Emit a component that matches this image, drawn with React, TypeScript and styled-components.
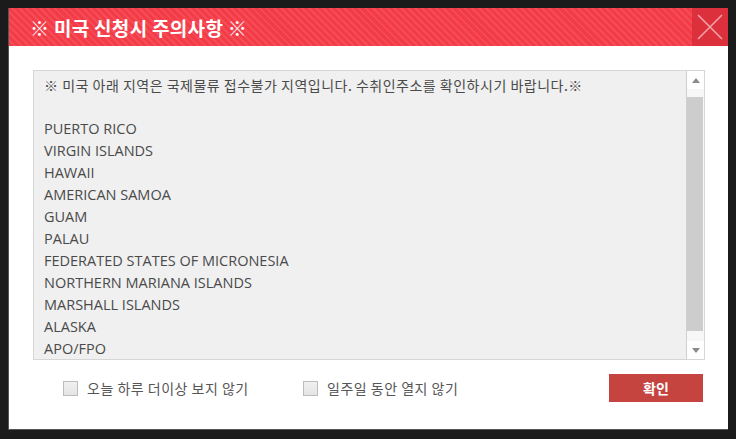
import { createGlobalStyle, styled } from 'styled-components';

const GlobalStyle = createGlobalStyle`
  html, body {
    margin: 0;
    padding: 0;
    background: #1b1b1b;
  }
  body {
    padding: 8px;
    font-family: 'Open Sans', 'Noto Sans CJK KR', sans-serif;
  }
`;

const regions = [
  'PUERTO RICO',
  'VIRGIN ISLANDS',
  'HAWAII',
  'AMERICAN SAMOA',
  'GUAM',
  'PALAU',
  'FEDERATED STATES OF MICRONESIA',
  'NORTHERN MARIANA ISLANDS',
  'MARSHALL ISLANDS',
  'ALASKA',
  'APO/FPO',
];

const Modal = styled.div`
  width: 720px;
  height: 422px;
  box-sizing: border-box;
  background: #fff;
  border-left: 1px solid #555;
  border-bottom: 1px solid #555;
  display: flex;
  flex-direction: column;
`;

const Header = styled.header`
  display: flex;
  align-items: center;
  height: 38px;
  flex-shrink: 0;
  background: repeating-linear-gradient(
    45deg,
    #f43c48 0px,
    #f43c48 3px,
    #f54d57 3px,
    #f54d57 5px
  );
`;

const Title = styled.h1`
  flex: 1;
  margin: 0;
  padding-left: 21px;
  font-family: 'Noto Sans CJK KR', sans-serif;
  font-size: 19px;
  font-weight: 700;
  color: #fff;
  letter-spacing: 0.3px;
`;

const CloseButton = styled.button`
  width: 36px;
  height: 38px;
  padding: 0;
  border: 0;
  background: #dc303c;
  display: flex;
  align-items: center;
  justify-content: center;
  cursor: pointer;
`;

const Body = styled.div`
  flex: 1;
  display: flex;
  flex-direction: column;
  padding: 24px 23px 0 24px;
`;

const NoticeBox = styled.div`
  display: flex;
  height: 290px;
  box-sizing: border-box;
  border: 1px solid #d6d6d6;
  background: #f0f0f0;
`;

const NoticeText = styled.div`
  flex: 1;
  overflow: hidden;
  padding: 3px 10px;
  line-height: 22px;
  color: #4a4a4a;
`;

const Line = styled.div<{ $gap?: boolean }>`
  white-space: nowrap;
  margin-bottom: ${({ $gap }) => ($gap ? '22px' : '0')};
  font-family: 'Open Sans', 'Noto Sans CJK KR', sans-serif;
  font-size: 14.5px;
`;

const KoreanLine = styled(Line)`
  font-family: 'Noto Sans CJK KR', sans-serif;
  font-size: 14px;
  letter-spacing: 0.5px;
`;

const Scrollbar = styled.div`
  width: 17px;
  border-left: 1px solid #cfcfcf;
  background: #f7f7f7;
  display: flex;
  flex-direction: column;
`;

const ArrowButton = styled.div`
  height: 18px;
  background: #fff;
  display: flex;
  align-items: center;
  justify-content: center;
`;

const Track = styled.div`
  flex: 1;
  padding: 8px 1px 10px 0;
  display: flex;
`;

const Thumb = styled.div`
  flex: 1;
  background: #cdcdcd;
`;

const Footer = styled.div`
  display: flex;
  align-items: center;
  padding: 14px 2px 0 30px;
`;

const CheckLabel = styled.label<{ $width: string }>`
  display: flex;
  align-items: center;
  gap: 9px;
  width: ${({ $width }) => $width};
  font-family: 'Noto Sans CJK KR', sans-serif;
  font-size: 14px;
  letter-spacing: 0.5px;
  color: #555;
`;

const CheckBox = styled.span`
  flex-shrink: 0;
  width: 13px;
  height: 13px;
  border: 1px solid #bdbdbd;
  background: linear-gradient(#f0f0f0, #e4e4e4);
`;

const ConfirmButton = styled.button`
  margin-left: auto;
  width: 94px;
  height: 28px;
  border: 0;
  background: #c5443f;
  color: #fff;
  font-family: 'Noto Sans CJK KR', sans-serif;
  font-size: 14px;
  font-weight: 700;
  cursor: pointer;
`;

const Triangle = ({ down }: { down?: boolean }) => (
  <svg width="8" height="5" viewBox="0 0 8 5">
    <path d={down ? 'M0 0 H8 L4 5 Z' : 'M0 5 H8 L4 0 Z'} fill="#8a8a8a" />
  </svg>
);

export default function App() {
  return (
    <>
      <GlobalStyle />
      <Modal>
        <Header>
          <Title>※ 미국 신청시 주의사항 ※</Title>
          <CloseButton aria-label="닫기">
            <svg width="26" height="26" viewBox="0 0 26 26">
              <path d="M1 1 L25 25 M25 1 L1 25" stroke="#f3a2a8" strokeWidth="1.6" />
            </svg>
          </CloseButton>
        </Header>
        <Body>
          <NoticeBox>
            <NoticeText>
              <KoreanLine $gap>
                ※ 미국 아래 지역은 국제물류 접수불가 지역입니다. 수취인주소를 확인하시기 바랍니다.※
              </KoreanLine>
              {regions.map((r) => (
                <Line key={r}>{r}</Line>
              ))}
            </NoticeText>
            <Scrollbar>
              <ArrowButton>
                <Triangle />
              </ArrowButton>
              <Track>
                <Thumb />
              </Track>
              <ArrowButton>
                <Triangle down />
              </ArrowButton>
            </Scrollbar>
          </NoticeBox>
          <Footer>
            <CheckLabel $width="240px">
              <CheckBox />
              오늘 하루 더이상 보지 않기
            </CheckLabel>
            <CheckLabel $width="200px">
              <CheckBox />
              일주일 동안 열지 않기
            </CheckLabel>
            <ConfirmButton>확인</ConfirmButton>
          </Footer>
        </Body>
      </Modal>
    </>
  );
}
